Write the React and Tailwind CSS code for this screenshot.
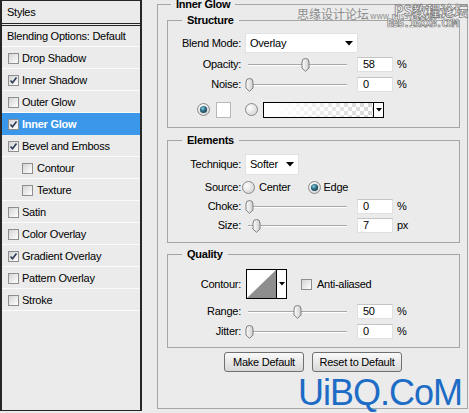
import React from "react";

const styles = [
  { label: "Drop Shadow", checked: false },
  { label: "Inner Shadow", checked: true },
  { label: "Outer Glow", checked: false },
  { label: "Inner Glow", checked: true, active: true },
  { label: "Bevel and Emboss", checked: true },
  { label: "Contour", checked: false, indent: true },
  { label: "Texture", checked: false, indent: true },
  { label: "Satin", checked: false },
  { label: "Color Overlay", checked: false },
  { label: "Gradient Overlay", checked: true },
  { label: "Pattern Overlay", checked: false },
  { label: "Stroke", checked: false },
];

const Check = ({ checked }) => (
  <div className="w-[11px] h-[11px] shrink-0 border border-[#8e8e8e] bg-linear-to-br from-[#d4d4d4] to-white flex items-center justify-center">
    {checked && (
      <svg width="9" height="9" viewBox="0 0 9 9">
        <path d="M1.5 4.5 L3.5 6.8 L7.5 1.5" fill="none" stroke="#2b3a55" strokeWidth="1.6" />
      </svg>
    )}
  </div>
);

const Radio = ({ on }) => (
  <svg width="13" height="13" viewBox="0 0 13 13" className="shrink-0">
    <defs>
      <radialGradient id={on ? "rOn" : "rOff"} cx="0.35" cy="0.35" r="0.8">
        <stop offset="0" stopColor="#ffffff" />
        <stop offset="1" stopColor="#cfcfcf" />
      </radialGradient>
      <radialGradient id="dot" cx="0.4" cy="0.35" r="0.7">
        <stop offset="0" stopColor="#8fd0e6" />
        <stop offset="0.5" stopColor="#2f6f86" />
        <stop offset="1" stopColor="#1a3f4f" />
      </radialGradient>
    </defs>
    <circle cx="6.5" cy="6.5" r="6" fill={on ? "url(#rOn)" : "url(#rOff)"} stroke="#8a8a8a" />
    {on && <circle cx="6.5" cy="6.5" r="3.6" fill="url(#dot)" />}
  </svg>
);

const Arrow = () => (
  <svg width="8" height="5" viewBox="0 0 8 5">
    <path d="M0 0 H8 L4 4.5 Z" fill="#000" />
  </svg>
);

const Slider = ({ left }) => (
  <div className="relative w-[105px] h-[15px] shrink-0">
    <div className="absolute left-[3px] right-[3px] top-[7px] h-[2px] border-t border-[#a8a8a8] bg-white" />
    <svg width="9" height="14" viewBox="0 0 9 14" className="absolute top-[1px]" style={{ left }}>
      <defs>
        <linearGradient id="th" x1="0" y1="0" x2="1" y2="0">
          <stop offset="0" stopColor="#ffffff" />
          <stop offset="1" stopColor="#cdcdcd" />
        </linearGradient>
      </defs>
      <path d="M1 4 Q1 0.5 4.5 0.5 Q8 0.5 8 4 L8 10 L4.5 13.3 L1 10 Z" fill="url(#th)" stroke="#7c7c7c" />
    </svg>
  </div>
);

const Field = ({ value }) => (
  <div className="ml-[7px] w-[36px] h-[15px] bg-white border border-[#e0e0e0] border-t-[#c4c4c4] pl-[5px] leading-[13px]">
    {value}
  </div>
);

const Label = ({ children }) => (
  <div className="w-[73px] shrink-0 text-right">{children}</div>
);

const SliderRow = ({ label, left, value, unit, className }) => (
  <div className={"flex items-center " + className}>
    <Label>{label}</Label>
    <div className="pl-[4px] flex items-center">
      <Slider left={left} />
      <Field value={value} />
      <span className="ml-[4px]">{unit}</span>
    </div>
  </div>
);

export default function App() {
  return (
    <div className="relative flex w-[469px] h-[413px] overflow-hidden bg-[#ebebeb] text-[11px] text-black font-['Liberation_Sans',Arial,sans-serif] tracking-[-0.25px]">
      {/* Styles list */}
      <div className="w-[142px] shrink-0 h-[411px] border-x-2 border-y border-[#262626] flex flex-col">
        <div className="h-[25px] border-b-[3px] border-double border-[#262626] flex items-center pl-[5px]">
          Styles
        </div>
        <div className="h-[21px] border-b border-[#fafafa] flex items-center pl-[5px]">
          Blending Options: Default
        </div>
        {styles.map((s) => (
          <div
            key={s.label}
            className={
              "h-[22px] border-b flex items-center pt-[1px] " +
              (s.indent ? "pl-[20px] " : "pl-[6px] ") +
              (s.active ? "bg-[#3a97ea] border-[#3a97ea] text-white font-bold" : "border-[#fafafa]")
            }
          >
            <Check checked={s.checked} />
            <span className={s.indent ? "ml-[4px]" : "ml-[3px]"}>{s.label}</span>
          </div>
        ))}
      </div>

      {/* Inner Glow panel */}
      <div className="flex-1 pl-[15px]">
        <fieldset className="mt-[-3px] h-[412px] w-[311px] border border-[#a5a5a5]">
          <legend className="ml-[13px] px-[5px] font-bold leading-[14px]">Inner Glow</legend>
          <div className="pl-[9px] flex flex-col">
            {/* Structure */}
            <fieldset className="mt-[2px] w-[293px] border border-[#a5a5a5] pb-[9px]">
              <legend className="ml-[14px] px-[5px] font-bold leading-[14px]">Structure</legend>
              <div className="mt-[6px] h-[20px] flex items-center">
                <Label>Blend Mode:</Label>
                <div className="ml-[4px] w-[113px] h-[20px] bg-white border border-[#e2e2e2] flex items-center justify-between pl-[4px] pr-[4px]">
                  <span>Overlay</span>
                  <Arrow />
                </div>
              </div>
              <SliderRow className="mt-[3px] h-[17px]" label="Opacity:" left={56} value="58" unit="%" />
              <SliderRow className="mt-[3px] h-[17px]" label="Noise:" left={0} value="0" unit="%" />
              <div className="mt-[8px] h-[17px] flex items-center pl-[29px]">
                <Radio on />
                <div className="ml-[6px] w-[15px] h-[16px] bg-white border border-[#b8b8b8]" />
                <div className="ml-[14px]">
                  <Radio />
                </div>
                <div className="ml-[5px] w-[121px] h-[16px] border border-black flex bg-white">
                  <svg width="109" height="14" className="shrink-0">
                    <defs>
                      <pattern id="chk" width="8" height="8" patternUnits="userSpaceOnUse">
                        <rect width="8" height="8" fill="#fff" />
                        <rect width="4" height="4" fill="#d6d6d6" />
                        <rect x="4" y="4" width="4" height="4" fill="#d6d6d6" />
                      </pattern>
                      <linearGradient id="fade" x1="0" y1="0" x2="1" y2="0">
                        <stop offset="0.1" stopColor="#fff" stopOpacity="1" />
                        <stop offset="1" stopColor="#fff" stopOpacity="0" />
                      </linearGradient>
                    </defs>
                    <rect width="109" height="14" fill="url(#chk)" />
                    <rect width="109" height="14" fill="url(#fade)" />
                  </svg>
                  <div className="flex-1 border-l border-black flex items-center justify-center">
                    <svg width="6" height="4" viewBox="0 0 6 4">
                      <path d="M0 0 H6 L3 3.5 Z" fill="#000" />
                    </svg>
                  </div>
                </div>
              </div>
            </fieldset>

            {/* Elements */}
            <fieldset className="mt-[5px] w-[293px] border border-[#a5a5a5] pb-[9px]">
              <legend className="ml-[14px] px-[5px] font-bold leading-[14px]">Elements</legend>
              <div className="mt-[7px] h-[21px] flex items-center">
                <Label>Technique:</Label>
                <div className="ml-[4px] w-[54px] h-[21px] bg-white border border-[#e2e2e2] flex items-center justify-between pl-[4px] pr-[4px]">
                  <span>Softer</span>
                  <Arrow />
                </div>
              </div>
              <div className="mt-[5px] h-[14px] flex items-center">
                <Label>Source:</Label>
                <div className="ml-[1px]">
                  <Radio />
                </div>
                <span className="ml-[4px]">Center</span>
                <div className="ml-[17px]">
                  <Radio on />
                </div>
                <span className="ml-[3px]">Edge</span>
              </div>
              <SliderRow className="mt-[5px] h-[15px]" label="Choke:" left={0} value="0" unit="%" />
              <SliderRow className="mt-[4px] h-[15px]" label="Size:" left={7} value="7" unit="px" />
            </fieldset>

            {/* Quality */}
            <fieldset className="mt-[4px] w-[293px] border border-[#a5a5a5] pb-[8px]">
              <legend className="ml-[14px] px-[5px] font-bold leading-[14px]">Quality</legend>
              <div className="mt-[8px] h-[30px] flex items-center">
                <Label>Contour:</Label>
                <div className="ml-[5px] w-[41px] h-[30px] border border-black flex bg-white">
                  <svg width="29" height="28" className="shrink-0">
                    <rect width="29" height="28" fill="#fff" />
                    <polygon points="0,28 29,0 29,28" fill="#8e8e8e" />
                  </svg>
                  <div className="flex-1 border-l border-black flex items-center justify-center">
                    <svg width="6" height="4" viewBox="0 0 6 4">
                      <path d="M0 0 H6 L3 3.5 Z" fill="#000" />
                    </svg>
                  </div>
                </div>
                <div className="ml-[14px]">
                  <Check />
                </div>
                <span className="ml-[5px]">Anti-aliased</span>
              </div>
              <SliderRow className="mt-[5px] h-[15px]" label="Range:" left={48} value="50" unit="%" />
              <SliderRow className="mt-[5px] h-[15px]" label="Jitter:" left={0} value="0" unit="%" />
            </fieldset>

            <div className="mt-[4px] ml-[57px] flex gap-[8px]">
              <button className="w-[80px] h-[20px] rounded-[3px] border border-[#707070] bg-linear-to-b from-[#fafafa] to-[#d8d8d8]">
                Make Default
              </button>
              <button className="w-[90px] h-[20px] rounded-[3px] border border-[#707070] bg-linear-to-b from-[#fafafa] to-[#d8d8d8]">
                Reset to Default
              </button>
            </div>
          </div>
        </fieldset>
      </div>

      {/* watermarks */}
      <div className="absolute left-[297px] top-[7px] flex items-baseline text-[#8c8c8c] font-['Noto_Sans_CJK_SC',sans-serif] tracking-normal">
        <span className="text-[12px] leading-[14px]">思缘设计论坛</span>
        <span className="text-[8px] leading-[14px] ml-[1px]">www.missyuan.com</span>
      </div>
      <div className="absolute left-[394px] top-[2px] text-[14px] leading-[16px] font-bold text-white [-webkit-text-stroke:0.8px_#7d7d7d] font-['Noto_Sans_CJK_SC',sans-serif] tracking-normal">
        PS教程论坛
      </div>
      <div className="absolute left-[387px] top-[18px] text-[11px] leading-[12px] font-bold text-white [-webkit-text-stroke:0.7px_#7d7d7d] font-['DejaVu_Sans_Mono',monospace] tracking-[-1.2px]">
        BBS.16XX8.COM
      </div>
      <div className="absolute left-[298px] top-[375px] text-[36px] leading-none text-[#1d6cc6] tracking-[-1px]">
        UiBQ.CoM
      </div>
    </div>
  );
}
